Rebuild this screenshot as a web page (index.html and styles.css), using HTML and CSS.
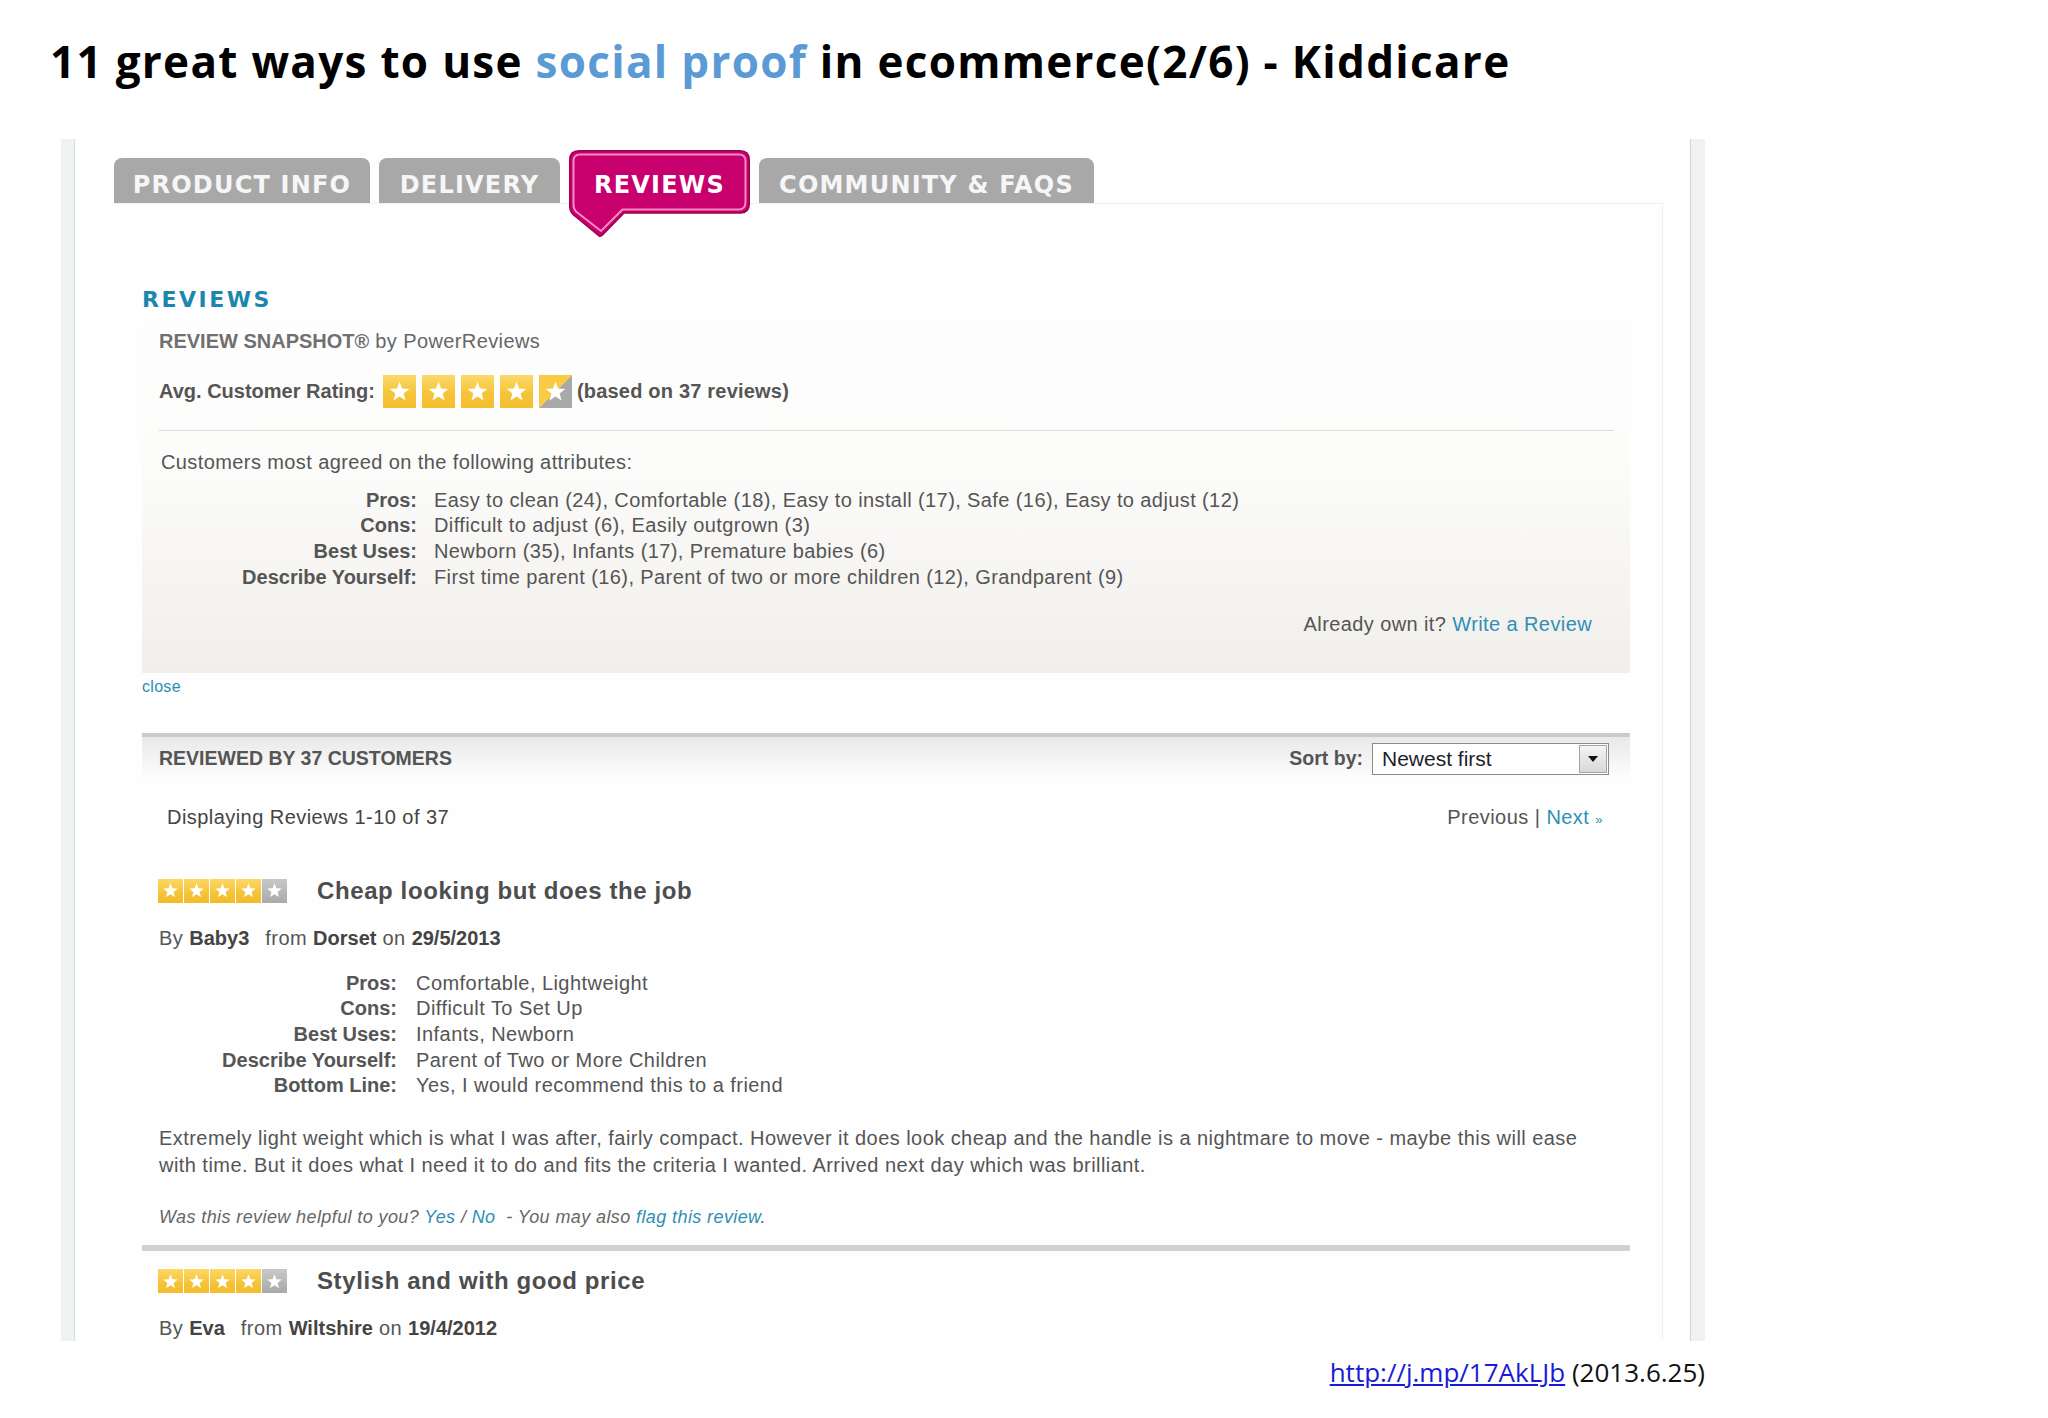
FILE: index.html
```html
<!DOCTYPE html>
<html lang="en">
<head>
<meta charset="utf-8">
<title>11 great ways to use social proof in ecommerce - Kiddicare</title>
<link rel="stylesheet" href="styles.css">
</head>
<body>
<svg class="defs" width="0" height="0" aria-hidden="true">
  <defs>
    <symbol id="star" viewBox="0 0 20 20">
      <path d="M10 1.5 L12.23 7.43 L18.56 7.72 L13.61 11.67 L15.29 17.78 L10 14.3 L4.71 17.78 L6.39 11.67 L1.44 7.72 L7.77 7.43 Z" fill="#fff"/>
    </symbol>
  </defs>
</svg>

<h1 class="title">11 great ways to use <span class="accent">social proof</span> in ecommerce(2/6) - Kiddicare</h1>

<div class="shot">
  <div class="band band-left"></div>
  <div class="page">
    <div class="tabs">
      <div class="tab tab-info">PRODUCT INFO</div>
      <div class="tab tab-delivery">DELIVERY</div>
      <div class="tab-active">
        <svg width="181" height="87" viewBox="0 0 181 87">
          <path d="M10 .75 H171 Q180.25 .75 180.25 10 V54 Q180.25 63 171 63 H55 L33 85.5 Q31 87 29.5 85.5 L4 64.5 Q.75 61 .75 56 V10 Q.75 .75 10 .75 Z" fill="#c8006e" stroke="#9c0050" stroke-width="1.5"/>
          <path d="M11 4.5 H170 Q176.5 4.5 176.5 11 V52 Q176.5 59.5 170 59.5 H53.5 L32 81 L7 61.5 Q4.5 59 4.5 54 V11 Q4.5 4.5 11 4.5 Z" fill="none" stroke="#f38cc6" stroke-width="2"/>
        </svg>
        <span>REVIEWS</span>
      </div>
      <div class="tab tab-community">COMMUNITY &amp; FAQS</div>
    </div>

    <div class="panel">
      <h2 class="reviews-heading">REVIEWS</h2>

      <div class="snapshot">
        <div class="snap-title"><b>REVIEW SNAPSHOT®</b> by PowerReviews</div>
        <div class="avg-row">
          <span class="avg-label">Avg. Customer Rating:</span>
          <span class="big-stars">
            <span class="bstar"><svg><use href="#star"/></svg></span>
            <span class="bstar"><svg><use href="#star"/></svg></span>
            <span class="bstar"><svg><use href="#star"/></svg></span>
            <span class="bstar"><svg><use href="#star"/></svg></span>
            <span class="bstar bstar-part"><svg><use href="#star"/></svg></span>
          </span>
          <span class="avg-count">(based on 37 reviews)</span>
        </div>
        <div class="rule"></div>
        <p class="agreed">Customers most agreed on the following attributes:</p>
        <dl class="attrs">
          <dt>Pros:</dt><dd>Easy to clean (24), Comfortable (18), Easy to install (17), Safe (16), Easy to adjust (12)</dd>
          <dt>Cons:</dt><dd>Difficult to adjust (6), Easily outgrown (3)</dd>
          <dt>Best Uses:</dt><dd>Newborn (35), Infants (17), Premature babies (6)</dd>
          <dt>Describe Yourself:</dt><dd>First time parent (16), Parent of two or more children (12), Grandparent (9)</dd>
        </dl>
        <div class="own">Already own it? <a class="link" href="#">Write a Review</a></div>
      </div>

      <a class="close" href="#">close</a>

      <div class="sortbar">
        <span class="sort-title">REVIEWED BY 37 CUSTOMERS</span>
        <span class="sort-right">
          <span class="sort-label">Sort by:</span>
          <span class="select">
            <span class="select-text">Newest first</span>
            <span class="select-btn"></span>
          </span>
        </span>
      </div>

      <div class="paging">
        <span>Displaying Reviews 1-10 of 37</span>
        <span class="pager">Previous | <a class="link" href="#">Next <span class="raquo">»</span></a></span>
      </div>

      <div class="review">
        <div class="review-head first">
          <span class="sstars">
            <span class="sstar"><svg><use href="#star"/></svg></span>
            <span class="sstar"><svg><use href="#star"/></svg></span>
            <span class="sstar"><svg><use href="#star"/></svg></span>
            <span class="sstar"><svg><use href="#star"/></svg></span>
            <span class="sstar sstar-off"><svg><use href="#star"/></svg></span>
          </span>
          <span class="review-title">Cheap looking but does the job</span>
        </div>
        <div class="byline">By <b class="name">Baby3</b>from <b>Dorset</b> on <b>29/5/2013</b></div>
        <dl class="rattrs">
          <dt>Pros:</dt><dd>Comfortable, Lightweight</dd>
          <dt>Cons:</dt><dd>Difficult To Set Up</dd>
          <dt>Best Uses:</dt><dd>Infants, Newborn</dd>
          <dt>Describe Yourself:</dt><dd>Parent of Two or More Children</dd>
          <dt>Bottom Line:</dt><dd>Yes, I would recommend this to a friend</dd>
        </dl>
        <p class="rbody">Extremely light weight which is what I was after, fairly compact. However it does look cheap and the handle is a nightmare to move - maybe this will ease with time. But it does what I need it to do and fits the criteria I wanted. Arrived next day which was brilliant.</p>
        <p class="helpful">Was this review helpful to you? <a class="link" href="#">Yes</a> / <a class="link" href="#">No</a> &nbsp;- You may also <a class="link" href="#">flag this review</a>.</p>
      </div>

      <div class="separator"></div>

      <div class="review">
        <div class="review-head">
          <span class="sstars">
            <span class="sstar"><svg><use href="#star"/></svg></span>
            <span class="sstar"><svg><use href="#star"/></svg></span>
            <span class="sstar"><svg><use href="#star"/></svg></span>
            <span class="sstar"><svg><use href="#star"/></svg></span>
            <span class="sstar sstar-off"><svg><use href="#star"/></svg></span>
          </span>
          <span class="review-title">Stylish and with good price</span>
        </div>
        <div class="byline">By <b class="name">Eva</b>from <b>Wiltshire</b> on <b>19/4/2012</b></div>
      </div>
    </div>
  </div>
  <div class="band band-right"></div>
</div>

<div class="footer"><a href="#">http://j.mp/17AkLJb</a> (2013.6.25)</div>
</body>
</html>
```

FILE: styles.css
```css
* { box-sizing: border-box; }

html, body {
  margin: 0;
  padding: 0;
  background: #fff;
}

body {
  font-family: "Liberation Sans", Arial, sans-serif;
  color: #555;
}

.defs {
  display: block;
  width: 0;
  height: 0;
  overflow: hidden;
}

/* Slide title */
.title {
  margin: 31px 0 0 50px;
  font: 700 44px/60px "Open Sans", "Noto Sans CJK KR", sans-serif;
  letter-spacing: 1.3px;
  color: #000;
  white-space: nowrap;
}

.accent { color: #5b9bd5; }

/* Screenshot frame */
.shot {
  display: flex;
  margin: 48px 0 0 61px;
  width: 1644px;
  height: 1202px;
  overflow: hidden;
  background: #fefefe;
}

.band { flex: none; }

.band-left {
  width: 14px;
  background: #eef2f2;
  border-right: 1px solid #d8dfdf;
}

.band-right {
  width: 15px;
  background: #f1f1f3;
  border-left: 1px solid #d4d4d8;
}

.page {
  flex: none;
  width: 1615px;
  padding-top: 11px;
}

/* Tabs */
.tabs {
  display: flex;
  align-items: flex-start;
  gap: 9px;
  padding-left: 39px;
}

.tab {
  margin-top: 8px;
  height: 45px;
  padding-top: 13px;
  border-radius: 8px 8px 0 0;
  background: #a8a8a8;
  color: #f6f6f6;
  font: 700 24px/28px "DejaVu Sans", sans-serif;
  letter-spacing: 1.2px;
  text-align: center;
  white-space: nowrap;
}

.tab-info { width: 256px; }
.tab-delivery { width: 181px; }
.tab-community { width: 335px; }

.tab-active {
  display: grid;
  width: 181px;
  height: 87px;
  margin-bottom: -34px;
}

.tab-active > * { grid-area: 1 / 1; }
.tab-active svg { display: block; }

.tab-active span {
  padding-top: 21px;
  text-align: center;
  color: #fff;
  font: 700 24px/28px "DejaVu Sans", sans-serif;
  letter-spacing: 1.2px;
}

/* Panel */
.panel {
  margin-left: 39px;
  width: 1549px;
  border-top: 1px solid #f0f0f4;
  border-right: 1px solid #f0f0f4;
  padding: 0 32px 0 28px;
}

.reviews-heading {
  margin: 83px 0 0;
  font: 700 22px/26px "DejaVu Sans", sans-serif;
  letter-spacing: 2.5px;
  color: #1c87ad;
}

.snapshot {
  padding: 16px 16px 37px 17px;
  background: linear-gradient(#fefefe, #fcfcfb 40%, #f1efeb);
  font-size: 20px;
  letter-spacing: 0.4px;
}

.snapshot b,
.snapshot dt,
.review b,
.review dt { letter-spacing: 0; }

.snap-title {
  line-height: 24px;
  color: #666;
}

.snap-title b { color: #707070; }

.avg-row {
  display: flex;
  align-items: center;
  height: 33px;
  margin-top: 22px;
  font-weight: 700;
  letter-spacing: 0;
  color: #555;
}

.avg-count { letter-spacing: 0.2px; }

.big-stars {
  display: flex;
  gap: 6px;
  margin: 0 5px 0 8px;
}

.bstar {
  display: grid;
  place-items: center;
  width: 33px;
  height: 33px;
  background: linear-gradient(#fcd968, #f6c43a 55%, #f4be2f);
}

.bstar svg { width: 23px; height: 23px; }

.bstar-part {
  background: linear-gradient(135deg, #f8ca45 50%, #a9a9a9 50%);
}

.rule {
  margin-top: 22px;
  height: 1px;
  background: #dcdcdc;
}

.agreed {
  margin: 19px 0 0;
  padding-left: 2px;
  line-height: 25.7px;
}

.attrs {
  display: grid;
  grid-template-columns: 258px 1fr;
  column-gap: 17px;
  margin: 12px 0 0;
  line-height: 25.7px;
}

.attrs dt, .rattrs dt {
  font-weight: 700;
  text-align: right;
}

.attrs dd, .rattrs dd { margin: 0; }

.own {
  margin-top: 21px;
  padding-right: 22px;
  line-height: 24px;
  text-align: right;
}

.link {
  color: #2f8fb6;
  text-decoration: none;
}

.close {
  display: block;
  margin-top: 5px;
  font-size: 16px;
  letter-spacing: 0.3px;
  line-height: 18px;
  color: #2b8db3;
  text-decoration: none;
}

/* Sort bar */
.sortbar {
  display: flex;
  align-items: center;
  justify-content: space-between;
  height: 48px;
  margin-top: 37px;
  padding: 0 21px 0 17px;
  border-top: 4px solid #cacaca;
  background: linear-gradient(#e9e9e9, #f6f6f6 60%, #fff);
  font-size: 19.5px;
  font-weight: 700;
  color: #555;
}

.sort-right {
  display: flex;
  align-items: center;
  gap: 9px;
}

.select {
  display: flex;
  width: 237px;
  height: 32px;
  border: 1px solid #8b8b8b;
  background: #fff;
}

.select-text {
  flex: 1;
  padding-left: 9px;
  font-size: 21px;
  font-weight: 400;
  line-height: 30px;
  color: #1d1d2b;
}

.select-btn {
  display: grid;
  place-items: center;
  width: 28px;
  margin: 1px 1px 1px 0;
  border: 1px solid #a3a3a3;
  background: linear-gradient(#f4f4f4, #d8d8d8);
}

.select-btn::after {
  content: "";
  border-left: 5px solid transparent;
  border-right: 5px solid transparent;
  border-top: 6px solid #111;
}

/* Paging */
.paging {
  display: flex;
  justify-content: space-between;
  margin-top: 24px;
  padding: 0 27px 0 25px;
  font-size: 20px;
  letter-spacing: 0.45px;
  line-height: 24px;
  color: #444;
}

.pager { color: #555; }
.raquo { font-size: 13px; }

/* Reviews */
.review {
  padding: 0 17px;
  font-size: 20px;
  letter-spacing: 0.45px;
  color: #555;
}

.review-head {
  display: flex;
  align-items: center;
  height: 24px;
  margin-top: 18px;
  margin-left: -1px;
}

.review-head.first { margin-top: 47px; }

.sstars {
  display: flex;
  gap: 1px;
}

.sstar {
  display: grid;
  place-items: center;
  width: 25px;
  height: 24px;
  background: linear-gradient(#fcd866, #f5c336 60%, #f2bc2c);
}

.sstar svg { width: 17px; height: 17px; }

.sstar-off { background: linear-gradient(#c8c8c8, #a9a9a9); }

.review-title {
  margin-left: 30px;
  font-size: 24px;
  font-weight: 700;
  letter-spacing: 0.6px;
  color: #4d4d4d;
}

.byline {
  margin-top: 23px;
  line-height: 24px;
}

.byline b { color: #444; }
.byline .name { margin-right: 16px; }

.rattrs {
  display: grid;
  grid-template-columns: 238px 1fr;
  column-gap: 19px;
  margin: 21px 0 0;
  line-height: 25.7px;
}

.rbody {
  margin: 26px 0 0;
  line-height: 27px;
}

.helpful {
  margin: 27px 0 0;
  font-size: 18px;
  font-style: italic;
  letter-spacing: 0.4px;
  line-height: 22px;
  color: #666;
}

.separator {
  margin-top: 17px;
  height: 6px;
  background: #d2d2d2;
}

/* Footer */
.footer {
  width: 1644px;
  margin: 15px 0 0 61px;
  text-align: right;
  font: 26px/33px "Open Sans", "Noto Sans CJK KR", sans-serif;
  color: #111;
}

.footer a {
  color: #1a1ad6;
  text-decoration: underline;
}
```
